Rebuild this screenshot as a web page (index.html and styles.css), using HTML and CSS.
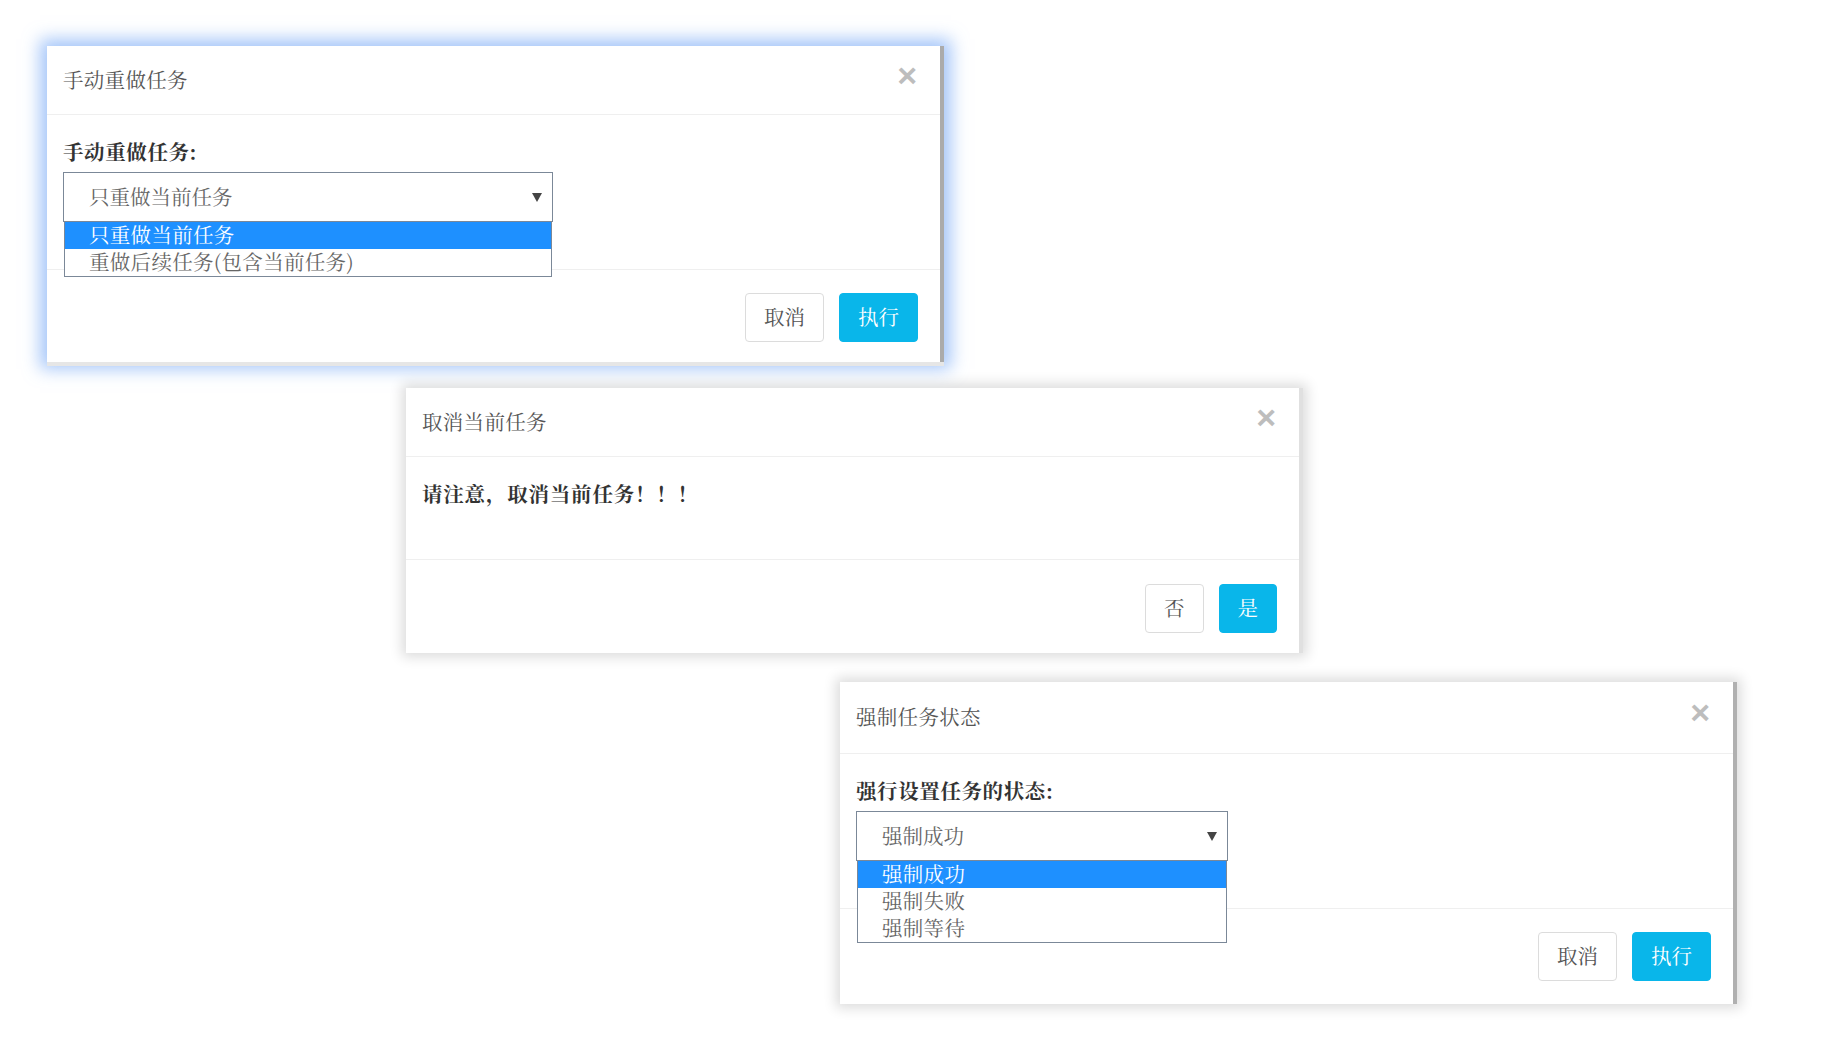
FILE: index.html
```html
<!DOCTYPE html>
<html lang="zh-CN">
<head>
<meta charset="utf-8">
<title>任务操作对话框</title>
<link rel="stylesheet" href="styles.css">
</head>
<body>
<main class="canvas">
  <section class="modal modal-redo">
    <header class="modal-header">
      <h4 class="modal-title">手动重做任务</h4>
      <span class="close">×</span>
    </header>
    <div class="modal-body">
      <label class="field-label">手动重做任务:</label>
      <div class="select-wrap select-wide">
        <div class="select"><span>只重做当前任务</span><i class="caret"></i></div>
        <ul class="options">
          <li class="selected">只重做当前任务</li>
          <li>重做后续任务(包含当前任务)</li>
        </ul>
      </div>
    </div>
    <footer class="modal-footer">
      <button class="btn">取消</button>
      <button class="btn btn-primary">执行</button>
    </footer>
  </section>

  <section class="modal modal-cancel">
    <header class="modal-header">
      <h4 class="modal-title">取消当前任务</h4>
      <span class="close">×</span>
    </header>
    <div class="modal-body body-notice">
      <p class="notice">请注意，取消当前任务！！！</p>
    </div>
    <footer class="modal-footer">
      <button class="btn">否</button>
      <button class="btn btn-primary">是</button>
    </footer>
  </section>

  <section class="modal modal-force">
    <header class="modal-header">
      <h4 class="modal-title">强制任务状态</h4>
      <span class="close">×</span>
    </header>
    <div class="modal-body">
      <label class="field-label">强行设置任务的状态:</label>
      <div class="select-wrap select-narrow">
        <div class="select"><span>强制成功</span><i class="caret"></i></div>
        <ul class="options">
          <li class="selected">强制成功</li>
          <li>强制失败</li>
          <li>强制等待</li>
        </ul>
      </div>
    </div>
    <footer class="modal-footer">
      <button class="btn">取消</button>
      <button class="btn btn-primary">执行</button>
    </footer>
  </section>
</main>
</body>
</html>
```

FILE: styles.css
```css
* { box-sizing: border-box; }

html, body {
  min-height: 100%;
}

body {
  margin: 0;
  background: #ffffff;
  font-family: "Noto Serif CJK SC", "Noto Sans CJK SC", serif;
  color: #333;
  text-spacing-trim: space-all;
}

.canvas {
  display: flex;
  flex-direction: column;
  align-items: flex-start;
  padding-top: 46px;
  min-height: 100vh;
}

.modal {
  width: 897px;
  background: #fff;
  border-right: 4px solid #ababab;
  position: relative;
}

.modal-redo {
  margin-left: 47px;
  box-shadow: 0 4px 0 #e6e6e6, 0 0 16px 7px rgba(105, 160, 245, 0.6);
}

.modal-cancel {
  margin-left: 406px;
  margin-top: 26px;
  border-right-color: #e0e0e0;
  box-shadow: 0 0 12px 4px rgba(0, 0, 0, 0.14);
}

.modal-force {
  margin-left: 840px;
  margin-top: 29px;
  border-right-color: #b0b0b0;
  box-shadow: 0 0 12px 4px rgba(0, 0, 0, 0.14);
}

.modal-header {
  height: 69px;
  display: flex;
  align-items: center;
  justify-content: space-between;
  padding: 0 23px 3px 16px;
  border-bottom: 1px solid #efefef;
}

.modal-force .modal-header {
  height: 72px;
}

.modal-title {
  margin: 0;
  font-size: 20.5px;
  font-weight: normal;
  color: #555;
  line-height: 28px;
  letter-spacing: 0.3px;
}

.close {
  font-family: "Liberation Sans", Arial, sans-serif;
  font-size: 34px;
  font-weight: bold;
  color: #bdbdbd;
  line-height: 1;
  margin-bottom: 8px;
}

.modal-body {
  padding: 23px 16px 47px;
  border-bottom: 1px solid #efefef;
}

.field-label {
  display: block;
  font-size: 20.5px;
  font-weight: bold;
  color: #333;
  line-height: 26px;
  margin-bottom: 8px;
  letter-spacing: 0.6px;
}

.select-wrap {
  position: relative;
}

.select-wide { width: 490px; }
.select-narrow { width: 372px; }

.select {
  height: 50px;
  border: 1px solid #7b8898;
  display: flex;
  align-items: center;
  justify-content: space-between;
  padding: 0 10px 3px 25px;
  font-size: 20.5px;
  color: #666;
  background: #fff;
}

.caret {
  width: 0;
  height: 0;
  border-left: 5px solid transparent;
  border-right: 5px solid transparent;
  border-top: 9px solid #444;
  margin-top: 3px;
}

.options {
  position: absolute;
  top: 100%;
  left: 1px;
  right: 1px;
  margin: 0;
  padding: 0;
  list-style: none;
  background: #fff;
  border: 1px solid #7b8898;
  border-top: none;
  z-index: 2;
}

.options li {
  height: 27px;
  line-height: 25px;
  padding-left: 24px;
  font-size: 20.5px;
  color: #666;
  white-space: nowrap;
  letter-spacing: 0.3px;
}

.options li.selected {
  background: #1e90ff;
  color: #fff;
}

.body-notice {
  padding: 23px 16px 53px;
}

.notice {
  margin: 0;
  font-size: 20.5px;
  font-weight: bold;
  line-height: 26px;
  color: #333;
  letter-spacing: 0.8px;
}

.modal-footer {
  display: flex;
  justify-content: flex-end;
  gap: 15px;
  padding: 23px 22px 20px;
}

.modal-cancel .modal-footer {
  padding-top: 24px;
}

.modal-force .modal-footer {
  padding-bottom: 23px;
}

.btn {
  height: 49px;
  padding: 0 18px 3px;
  font-family: inherit;
  font-size: 20.5px;
  color: #555;
  background: #fff;
  border: 1px solid #dcdcdc;
  border-radius: 4px;
}

.btn-primary {
  background: #09b6ea;
  border-color: #09b6ea;
  color: #fff;
}
```
